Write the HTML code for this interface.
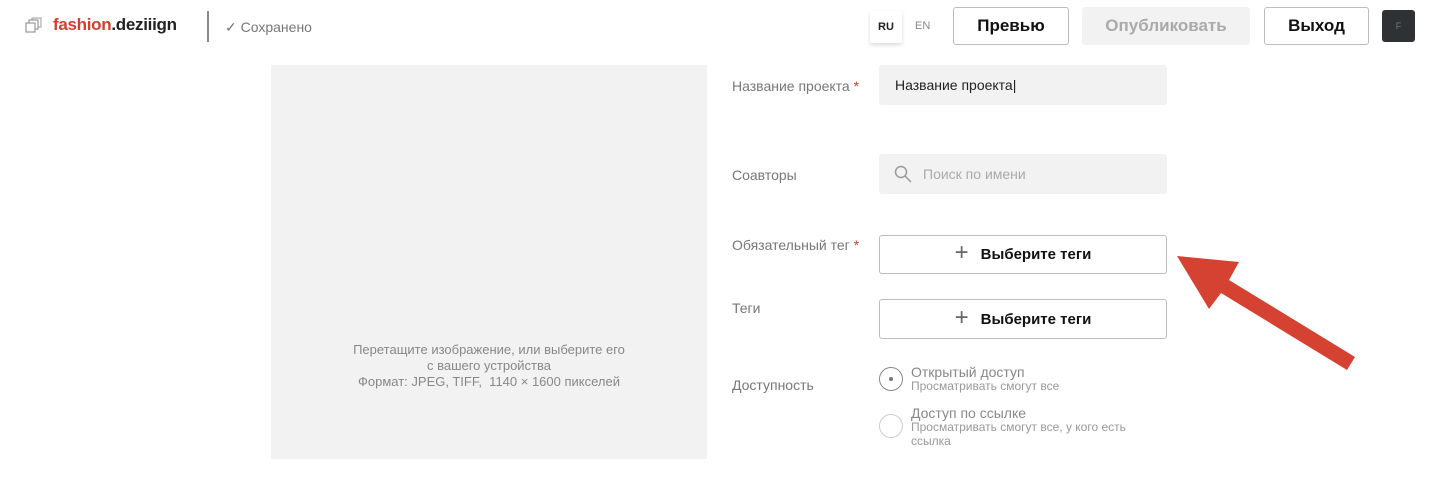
<!DOCTYPE html>
<html><head><meta charset="utf-8"><style>
*{box-sizing:border-box;margin:0;padding:0}
body{width:1440px;height:488px;background:#fff;font-family:"Liberation Sans",sans-serif;position:relative;overflow:hidden;color:#222}
.a{position:absolute}
.btn{position:absolute;border:1px solid #bdbdbd;border-radius:3px;background:#fff;font-size:17px;font-weight:bold;display:flex;align-items:center;justify-content:center;color:#111}
.lbl{position:absolute;font-size:14px;color:#777}
.in{position:absolute;background:#f2f2f2;border-radius:3px;font-size:14px;display:flex;align-items:center}
.st{color:#d0402f}
</style></head><body>
<svg class="a" style="left:25px;top:17px" width="18" height="18" viewBox="0 0 18 18" fill="none" stroke="#999" stroke-width="1.2"><rect x="1" y="6" width="9" height="9"/><path d="M4 6V3h9v9h-3"/><path d="M7 3V1h9v9h-3" opacity=".8"/></svg>
<div class="a" style="left:53px;top:15px;font-size:17px;font-weight:bold;letter-spacing:-0.3px"><span style="color:#d0402f">fashion</span>.deziiign</div>
<div class="a" style="left:207px;top:11px;width:2px;height:31px;background:#888"></div>
<div class="a" style="left:225px;top:19px;font-size:14px;color:#777">✓ Сохранено</div>
<div class="a" style="left:870px;top:11px;width:32px;height:32px;background:#fff;box-shadow:0 2px 4px rgba(0,0,0,.15);border-radius:2px;font-size:11px;font-weight:bold;display:flex;align-items:center;justify-content:center">RU</div>
<div class="a" style="left:915px;top:20px;font-size:11px;color:#888">EN</div>
<div class="btn" style="left:953px;top:7px;width:116px;height:38px">Превью</div>
<div class="btn" style="left:1082px;top:7px;width:168px;height:38px;background:#f2f2f2;border-color:#f2f2f2;color:#aaa">Опубликовать</div>
<div class="btn" style="left:1264px;top:7px;width:105px;height:38px">Выход</div>
<div class="a" style="left:1382px;top:10px;width:33px;height:32px;background:#2f3235;border-radius:3px;color:#777;font-size:9px;display:flex;align-items:center;justify-content:center">F</div>
<div class="a" style="left:271px;top:65px;width:436px;height:394px;background:#f2f2f2"></div>
<div class="a" style="left:271px;top:342px;width:436px;text-align:center;font-size:13px;color:#888;line-height:16px">Перетащите изображение, или выберите его<br>с вашего устройства<br>Формат: JPEG, TIFF,&nbsp; 1140 × 1600 пикселей</div>
<div class="lbl" style="left:732px;top:78px">Название проекта <span class="st">*</span></div>
<div class="in" style="left:879px;top:65px;width:288px;height:40px;padding-left:16px;color:#222">Название проекта|</div>
<div class="lbl" style="left:732px;top:167px">Соавторы</div>
<div class="in" style="left:879px;top:154px;width:288px;height:40px;padding-left:44px;color:#aaa">Поиск по имени</div>
<svg class="a" style="left:894px;top:165px" width="18" height="18" viewBox="0 0 18 18" fill="none" stroke="#999" stroke-width="1.5"><circle cx="7" cy="7" r="5.5"/><path d="M11 11l6 6"/></svg>
<div class="lbl" style="left:732px;top:237px">Обязательный тег <span class="st">*</span></div>
<div class="btn" style="left:879px;top:235px;width:288px;height:39px;font-size:15px"><span style="font-weight:300;font-size:24px;color:#666;margin-right:12px;margin-top:-3px">+</span>Выберите теги</div>
<div class="lbl" style="left:732px;top:300px">Теги</div>
<div class="btn" style="left:879px;top:299px;width:288px;height:40px;font-size:15px"><span style="font-weight:300;font-size:24px;color:#666;margin-right:12px;margin-top:-3px">+</span>Выберите теги</div>
<div class="lbl" style="left:732px;top:377px">Доступность</div>
<div class="a" style="left:879px;top:367px;width:24px;height:24px;border:1.5px solid #888;border-radius:50%"></div>
<div class="a" style="left:889px;top:377px;width:4px;height:4px;background:#777;border-radius:50%"></div>
<div class="a" style="left:911px;top:364px;font-size:14px;color:#888">Открытый доступ</div>
<div class="a" style="left:911px;top:379px;font-size:12px;color:#999">Просматривать смогут все</div>
<div class="a" style="left:879px;top:414px;width:24px;height:24px;border:1.5px solid #ccc;border-radius:50%"></div>
<div class="a" style="left:911px;top:405px;font-size:14px;color:#888">Доступ по ссылке</div>
<div class="a" style="left:911px;top:420px;font-size:12px;color:#999;line-height:14px">Просматривать смогут все, у кого есть<br>ссылка</div>
<svg class="a" style="left:0;top:0" width="1440" height="488"><polygon points="1177,256 1239,262 1229,280 1355,357 1347,370 1221,293 1209,309" fill="#d64232"/></svg>
</body></html>
